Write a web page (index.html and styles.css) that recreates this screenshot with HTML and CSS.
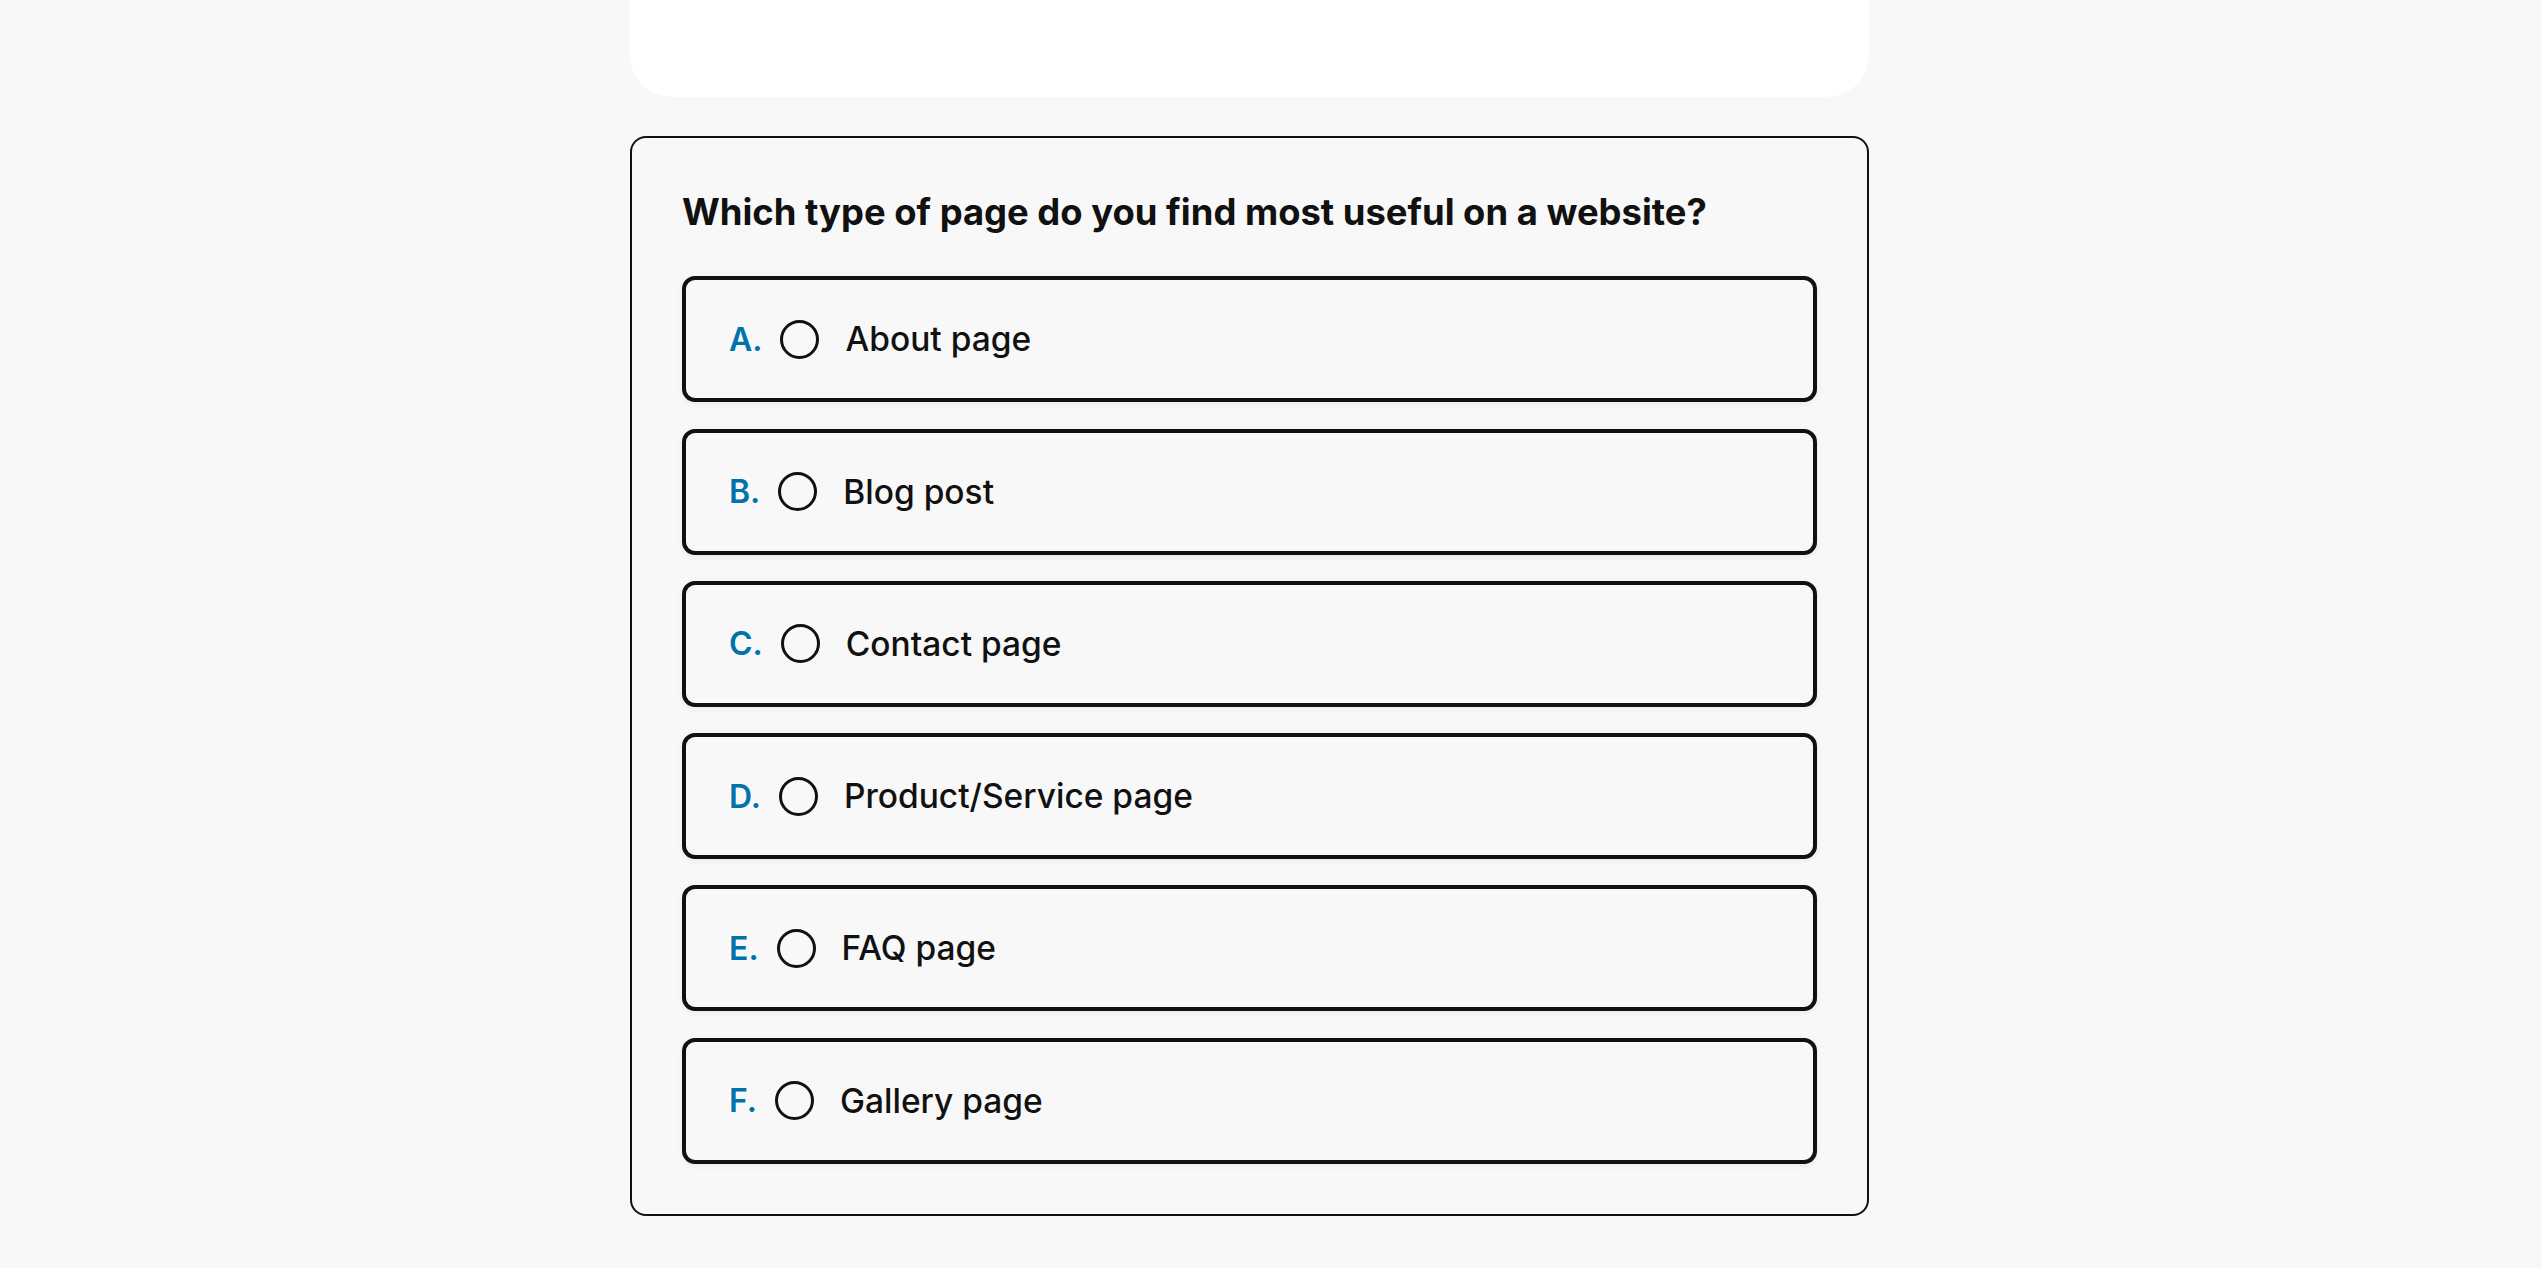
FILE: index.html
```html
<!DOCTYPE html>
<html lang="en">
<head>
<meta charset="utf-8">
<title>Quiz</title>
<link rel="stylesheet" href="styles.css">
</head>
<body>
<div class="container">
  <div class="top-card"></div>
  <section class="quiz">
    <h2 class="question">Which type of page do you find most useful on a website?</h2>
    <div class="options">
      <label class="option"><span class="letter">A.</span><span class="radio"></span><span class="text">About page</span></label>
      <label class="option"><span class="letter">B.</span><span class="radio"></span><span class="text">Blog post</span></label>
      <label class="option"><span class="letter">C.</span><span class="radio"></span><span class="text">Contact page</span></label>
      <label class="option"><span class="letter">D.</span><span class="radio"></span><span class="text">Product/Service page</span></label>
      <label class="option"><span class="letter">E.</span><span class="radio"></span><span class="text">FAQ page</span></label>
      <label class="option"><span class="letter">F.</span><span class="radio"></span><span class="text">Gallery page</span></label>
    </div>
  </section>
</div>
</body>
</html>
```

FILE: styles.css
```css
html, body {
  margin: 0;
  padding: 0;
}
body {
  background: #f8f8f8;
  font-family: Inter, "Noto Sans", "Liberation Sans", sans-serif;
  color: #111;
}
.container {
  width: 1239px;
  margin-left: 630px;
}
.top-card {
  height: 97px;
  background: #ffffff;
  border-radius: 0 0 42px 42px;
}
.quiz {
  margin-top: 38.7px;
  border: 2px solid #111;
  border-radius: 16px;
  padding: 52px 50px 50px;
}
.question {
  margin: 0 0 42px;
  font-size: 36.4px;
  font-weight: 700;
  line-height: 44.6px;
  color: #111;
}
.options {
  display: flex;
  flex-direction: column;
  gap: 26.3px;
}
.option {
  box-sizing: border-box;
  height: 126px;
  border: 4px solid #111;
  border-radius: 13px;
  padding: 0 43px;
  display: flex;
  align-items: center;
  box-shadow: 0 2px 6px rgba(0, 0, 0, 0.06);
  font-size: 32px;
}
.letter {
  color: #0073aa;
  font-weight: 600;
  margin-right: 18px;
}
.radio {
  box-sizing: border-box;
  width: 39px;
  height: 39px;
  border: 3px solid #111;
  border-radius: 50%;
  margin-right: 26px;
  flex: none;
}
.text {
  font-size: 33.5px;
  font-weight: 500;
  color: #111;
}
```
